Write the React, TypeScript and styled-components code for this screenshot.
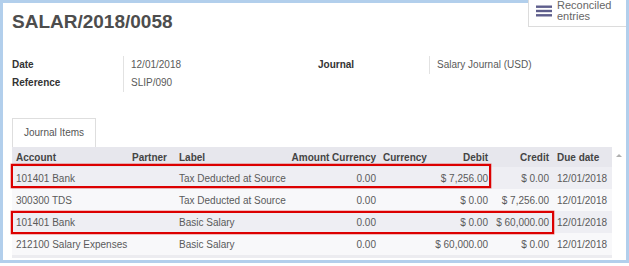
import React from "react";
import styled, { createGlobalStyle } from "styled-components";

const Global = createGlobalStyle`
  html, body { margin: 0; padding: 0; background: #fff; }
  body { width: 629px; height: 266px; overflow: hidden; }
`;

const Frame = styled.div`
  position: relative;
  box-sizing: border-box;
  width: 629px;
  height: 263px;
  border: 3px solid #b2cfec;
  padding: 0 1px 0 9px;
  background: #fff;
  font-family: "Liberation Sans", Arial, sans-serif;
  color: #555;
`;

const ReconciledButton = styled.div`
  position: absolute;
  top: -3px;
  right: 0;
  box-sizing: border-box;
  width: 98px;
  height: 27px;
  display: flex;
  align-items: flex-start;
  gap: 5px;
  padding: 0 0 0 7px;
  background: #fff;
  border-left: 1px solid #dcdcdc;
  border-bottom: 1px solid #dcdcdc;
`;

const BurgerIcon = styled.svg`
  flex: none;
  margin-top: 5px;
`;

const ButtonText = styled.div`
  font-size: 11px;
  line-height: 11px;
  color: #666;
`;

const Title = styled.h1`
  margin: 0;
  padding-top: 7px;
  font-size: 19px;
  line-height: 24px;
  font-weight: bold;
  color: #4d4d4d;
`;

const InfoGrid = styled.div`
  margin-top: 22px;
  display: grid;
  grid-template-columns: 306px 1fr;
`;

const FieldGroup = styled.div`
  display: grid;
  grid-template-columns: 111px 1fr;
  grid-auto-rows: 18px;
  font-size: 10px;
  line-height: 18px;
`;

const FieldLabel = styled.div`
  font-weight: bold;
  color: #333;
`;

const FieldValue = styled.div`
  border-left: 1px solid #e2e2e2;
  padding-left: 7px;
  color: #5a5a5a;
`;

const TabBar = styled.div`
  display: flex;
  margin-top: 26px;
`;

const Tab = styled.div`
  box-sizing: border-box;
  height: 29px;
  padding: 0 11px;
  border: 1px solid #dedede;
  border-bottom: none;
  font-size: 10px;
  line-height: 28px;
  color: #555;
  background: #fff;
`;

const TableWrap = styled.div`
  position: relative;
  display: flex;
  width: 613px;
`;

const Table = styled.div`
  width: 600px;
  font-size: 10px;
`;

const COLS = "118px 45px 115px 89px 53px 59px 62px 59px";

const HeaderRow = styled.div`
  display: grid;
  grid-template-columns: ${COLS};
  height: 20px;
  align-items: center;
  background: #e7e7ed;
  font-weight: bold;
  color: #444;
`;

const Row = styled.div<{ $striped: boolean }>`
  display: grid;
  grid-template-columns: ${COLS};
  height: 22px;
  align-items: center;
  background: ${(p) => (p.$striped ? "#eeeef3" : "#f8f8fa")};
  color: #5a5a5a;
`;

const Cell = styled.div<{ $align: "left" | "right"; $pl: number; $pr: number }>`
  padding: 0 ${(p) => p.$pr}px 0 ${(p) => p.$pl}px;
  text-align: ${(p) => p.$align};
  white-space: nowrap;
  overflow: hidden;
`;

const Footer = styled.div`
  height: 3px;
  background: #ececf0;
`;

const ScrollColumn = styled.div`
  position: relative;
  width: 13px;
  background: #fff;
`;

const ScrollArrow = styled.span`
  position: absolute;
  top: 7px;
  left: 4px;
  width: 0;
  height: 0;
  border-left: 3px solid transparent;
  border-right: 3px solid transparent;
  border-bottom: 3px solid #b0b0b0;
`;

const Highlight = styled.div<{ $top: number; $width: number; $height: number }>`
  position: absolute;
  left: -1px;
  top: ${(p) => p.$top}px;
  width: ${(p) => p.$width}px;
  height: ${(p) => p.$height}px;
  box-sizing: border-box;
  border: 2px solid #dc0000;
  box-shadow: 0 0 0 0.5px rgba(220, 0, 0, 0.5);
  pointer-events: none;
`;

type Col = { title: string; align: "left" | "right"; pl: number; pr: number };

const columns: Col[] = [
  { title: "Account", align: "left", pl: 4, pr: 2 },
  { title: "Partner", align: "right", pl: 2, pr: 8 },
  { title: "Label", align: "left", pl: 4, pr: 2 },
  { title: "Amount Currency", align: "right", pl: 0, pr: 3 },
  { title: "Currency", align: "left", pl: 4, pr: 0 },
  { title: "Debit", align: "right", pl: 0, pr: 3 },
  { title: "Credit", align: "right", pl: 0, pr: 4 },
  { title: "Due date", align: "left", pl: 4, pr: 0 },
];

const rows: string[][] = [
  ["101401 Bank", "", "Tax Deducted at Source", "0.00", "", "$ 7,256.00", "$ 0.00", "12/01/2018"],
  ["300300 TDS", "", "Tax Deducted at Source", "0.00", "", "$ 0.00", "$ 7,256.00", "12/01/2018"],
  ["101401 Bank", "", "Basic Salary", "0.00", "", "$ 0.00", "$ 60,000.00", "12/01/2018"],
  ["212100 Salary Expenses", "", "Basic Salary", "0.00", "", "$ 60,000.00", "$ 0.00", "12/01/2018"],
];

export default function App() {
  return (
    <>
      <Global />
      <Frame>
        <ReconciledButton>
          <BurgerIcon width="16" height="12" viewBox="0 0 16 12">
            <rect x="0" y="0.5" width="16" height="2.4" fill="#5e5e8c" />
            <rect x="0" y="4.8" width="16" height="2.4" fill="#5e5e8c" />
            <rect x="0" y="9.1" width="16" height="2.4" fill="#5e5e8c" />
          </BurgerIcon>
          <ButtonText>
            Reconciled
            <br />
            entries
          </ButtonText>
        </ReconciledButton>

        <Title>SALAR/2018/0058</Title>

        <InfoGrid>
          <FieldGroup>
            <FieldLabel>Date</FieldLabel>
            <FieldValue>12/01/2018</FieldValue>
            <FieldLabel>Reference</FieldLabel>
            <FieldValue>SLIP/090</FieldValue>
          </FieldGroup>
          <FieldGroup>
            <FieldLabel>Journal</FieldLabel>
            <FieldValue>Salary Journal (USD)</FieldValue>
          </FieldGroup>
        </InfoGrid>

        <TabBar>
          <Tab>Journal Items</Tab>
        </TabBar>

        <TableWrap>
          <Table>
            <HeaderRow>
              {columns.map((c) => (
                <Cell key={c.title} $align={c.align} $pl={c.pl} $pr={c.pr}>
                  {c.title}
                </Cell>
              ))}
            </HeaderRow>
            {rows.map((r, i) => (
              <Row key={i} $striped={i % 2 === 0}>
                {r.map((v, j) => (
                  <Cell key={j} $align={columns[j].align} $pl={columns[j].pl} $pr={columns[j].pr}>
                    {v}
                  </Cell>
                ))}
              </Row>
            ))}
            <Footer />
          </Table>
          <ScrollColumn>
            <ScrollArrow />
          </ScrollColumn>
          <Highlight $top={17} $width={480} $height={24} />
          <Highlight $top={64} $width={543} $height={23} />
        </TableWrap>
      </Frame>
    </>
  );
}
